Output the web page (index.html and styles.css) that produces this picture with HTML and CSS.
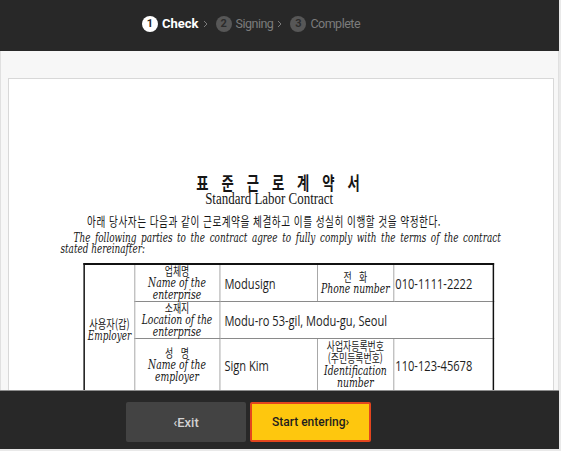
FILE: index.html
```html
<!DOCTYPE html>
<html lang="ko">
<head>
<meta charset="utf-8">
<title>Standard Labor Contract</title>
<link rel="stylesheet" href="styles.css">
</head>
<body>
<div class="app">
  <header class="topbar">
    <ol class="steps">
      <li class="step active"><span class="num">1</span><span class="label">Check</span></li>
      <li class="sep"><svg viewBox="0 0 5 8" width="5" height="8"><path d="M1 1l3 3-3 3" fill="none" stroke="#7a7a7a" stroke-width="1"/></svg></li>
      <li class="step"><span class="num">2</span><span class="label">Signing</span></li>
      <li class="sep"><svg viewBox="0 0 5 8" width="5" height="8"><path d="M1 1l3 3-3 3" fill="none" stroke="#7a7a7a" stroke-width="1"/></svg></li>
      <li class="step"><span class="num">3</span><span class="label">Complete</span></li>
    </ol>
  </header>

  <main class="viewer">
    <div class="page">
      <div class="doc">
        <h1 class="doc-title">표준근로계약서</h1>
        <h2 class="doc-subtitle">Standard Labor Contract</h2>
        <p class="doc-lead-ko">아래 당사자는 다음과 같이 근로계약을 체결하고 이를 성실히 이행할 것을 약정한다.</p>
        <p class="doc-lead-en">The following parties to the contract agree to fully comply with the terms of the contract stated hereinafter:</p>
        <table class="party">
          <colgroup>
            <col class="c1"><col class="c2"><col class="c3"><col class="c4"><col class="c5">
          </colgroup>
          <tr class="r1">
            <td class="party-head" rowspan="4"><span class="ko-big">사용자(갑)</span><span class="en-big">Employer</span></td>
            <td class="lbl"><span class="ko">업체명</span><span class="en">Name of the<br>enterprise</span></td>
            <td class="val">Modusign</td>
            <td class="lbl"><span class="ko">전&nbsp;&nbsp;&nbsp;화</span><span class="en">Phone number</span></td>
            <td class="val val-tight">010-1111-2222</td>
          </tr>
          <tr class="r2">
            <td class="lbl"><span class="ko">소재지</span><span class="en">Location of the<br>enterprise</span></td>
            <td class="val" colspan="3">Modu-ro 53-gil, Modu-gu, Seoul</td>
          </tr>
          <tr class="r3">
            <td class="lbl"><span class="ko">성&nbsp;&nbsp;&nbsp;명</span><span class="en">Name of the<br>employer</span></td>
            <td class="val">Sign Kim</td>
            <td class="lbl lbl-dense"><span class="ko">사업자등록번호</span><span class="ko">(주민등록번호)</span><span class="en">Identification<br>number</span></td>
            <td class="val val-tight">110-123-45678</td>
          </tr>
          <tr class="r4">
            <td class="lbl lbl-top"><span class="ko">대&nbsp;표&nbsp;자</span><span class="en">Representative</span></td>
            <td class="val"></td>
            <td class="lbl"></td>
            <td class="val"></td>
          </tr>
        </table>
      </div>
    </div>
  </main>

  <footer class="actionbar">
    <button class="btn btn-exit" type="button">‹Exit</button>
    <button class="btn btn-start" type="button">Start entering›</button>
  </footer>
</div>
</body>
</html>
```

FILE: styles.css
```css
* {
  box-sizing: border-box;
  margin: 0;
  padding: 0;
}

html, body {
  width: 100%;
  height: 100%;
}

body {
  background: #e9e9e9;
  font-family: Roboto, "Noto Sans", "Liberation Sans", sans-serif;
  overflow: hidden;
}

.app {
  width: 559px;
  height: 449px;
  display: flex;
  flex-direction: column;
  background: #f7f7f7;
}

/* ---------- top step bar ---------- */
.topbar {
  flex: none;
  height: 51px;
  background: #282828;
  display: flex;
  align-items: center;
  padding-left: 142px;
  padding-bottom: 4px;
}

.steps {
  list-style: none;
  display: flex;
  align-items: center;
}

.step {
  display: flex;
  align-items: center;
  gap: 4px;
  color: #7c7c7c;
  font-size: 12.5px;
  letter-spacing: -0.5px;
}

.num {
  width: 16px;
  height: 16px;
  border-radius: 50%;
  background: #575757;
  color: #2c2c2c;
  font-size: 11px;
  font-weight: 700;
  letter-spacing: 0;
  display: flex;
  align-items: center;
  justify-content: center;
}

.step.active {
  color: #ffffff;
  font-size: 13px;
  font-weight: 700;
  letter-spacing: 0;
}

.step.active .num {
  background: #ffffff;
  color: #282828;
}

.sep {
  display: flex;
  align-items: center;
  margin: 0 8px 0 4px;
}

/* ---------- document viewer ---------- */
.viewer {
  flex: 1;
  overflow: hidden;
  border-left: 1px solid #e0e0e0;
  border-right: 1px solid #e0e0e0;
  padding: 27px 4px 0 7px;
}

.page {
  background: #ffffff;
  border: 1px solid #d8d8d8;
  min-height: 420px;
  padding-top: 94px;
  display: flex;
  justify-content: center;
}

.doc {
  flex: none;
  width: 600px;
  transform: scaleX(0.74);
  transform-origin: 50% 0;
  color: #161616;
}

.doc-title {
  font-family: "Noto Sans CJK KR", "Noto Sans", sans-serif;
  font-size: 18px;
  font-weight: 700;
  line-height: 18px;
  letter-spacing: 17.5px;
  text-align: center;
  padding-left: 9.5px;
}

.doc-subtitle {
  font-family: "Liberation Serif", serif;
  font-size: 17.5px;
  font-weight: 400;
  line-height: 14.5px;
  text-align: center;
  padding-right: 32px;
}

.doc-lead-ko {
  font-family: "Noto Sans CJK KR", "Noto Sans", sans-serif;
  font-size: 13px;
  line-height: 13px;
  letter-spacing: 0.7px;
  margin-top: 8.5px;
  padding-left: 38px;
  white-space: nowrap;
}

.doc-lead-en {
  font-family: "DejaVu Serif", "Liberation Serif", serif;
  font-style: italic;
  font-size: 12px;
  line-height: 11px;
  margin-top: 6px;
  padding: 0 3px 0 2px;
  text-indent: 17.6px;
  text-align: justify;
}

/* ---------- party table ---------- */
.party {
  margin-top: 8px;
  margin-left: 33px;
  width: 553px;
  table-layout: fixed;
  border-collapse: collapse;
  border: 2px solid #111111;
}

.c1 { width: 68px; }
.c2 { width: 115px; }
.c3 { width: 132px; }
.c4 { width: 103px; }
.c5 { width: 135px; }

.party td {
  border: 1px solid #8a8a8a;
  padding: 0;
  vertical-align: middle;
  text-align: center;
}

.r1 { height: 37px; }
.r2 { height: 37px; }
.r3 { height: 52px; }
.r4 { height: 50px; }

.party-head {
  vertical-align: top !important;
  padding-top: 52px !important;
}

.ko-big {
  display: block;
  font-family: "Noto Sans CJK KR", "Noto Sans", sans-serif;
  font-size: 12.5px;
  line-height: 13px;
}

.en-big {
  display: block;
  font-family: "DejaVu Serif", "Liberation Serif", serif;
  font-style: italic;
  font-size: 12px;
  line-height: 13px;
}

.lbl .ko {
  display: block;
  font-family: "Noto Sans CJK KR", "Noto Sans", sans-serif;
  font-size: 12px;
  line-height: 12px;
}

.lbl .en {
  display: block;
  font-family: "DejaVu Serif", "Liberation Serif", serif;
  font-style: italic;
  font-size: 12.5px;
  line-height: 12px;
}

.lbl-dense .ko,
.lbl-dense .en {
  line-height: 12.5px;
}

.lbl-top {
  vertical-align: top !important;
  padding-top: 1px !important;
}

.val {
  font-family: "Open Sans", "Noto Sans", sans-serif;
  font-size: 15px;
  text-align: left !important;
  padding-left: 6px !important;
  color: #1e1e1e;
}

.val-tight {
  padding-left: 2px !important;
}

/* ---------- bottom action bar ---------- */
.actionbar {
  flex: none;
  height: 59px;
  background: #282828;
  border-top: 1px solid #8e8e8e;
  display: flex;
  align-items: flex-start;
  padding: 11px 0 0 126px;
  gap: 4px;
}

.btn {
  height: 40px;
  border: none;
  border-radius: 2px;
  font-family: Roboto, "Noto Sans", sans-serif;
  font-weight: 500;
  cursor: pointer;
}

.btn-exit {
  width: 120px;
  background: #434343;
  color: #d2d2d2;
  font-size: 13px;
}

.btn-start {
  width: 121px;
  background: #fec70e;
  border: 2px solid #e3451e;
  color: #1e1e1e;
  font-size: 12px;
}
```
